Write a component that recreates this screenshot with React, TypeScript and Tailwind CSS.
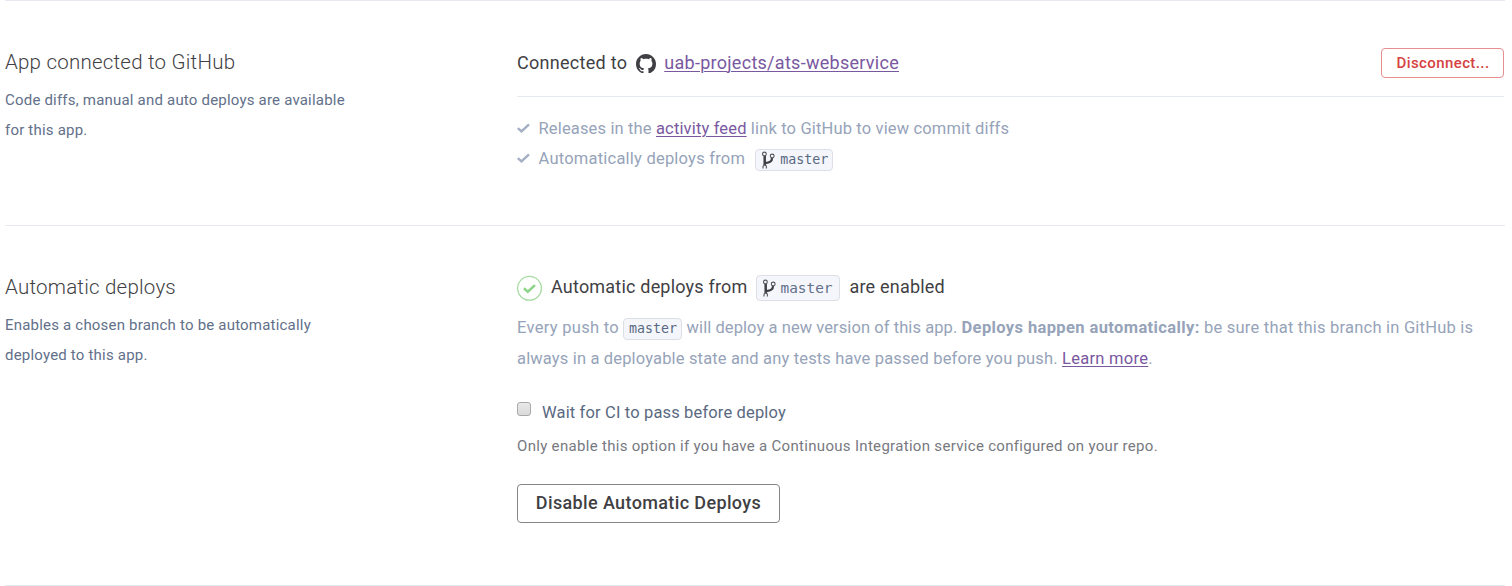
import type { ReactNode } from "react";

function GitHubMark() {
  return (
    <svg viewBox="0 0 16 15.2" className="h-[19px] w-5 shrink-0 fill-[#3f3f44]" aria-hidden="true">
      <path d="M8 0C3.58 0 0 3.58 0 8c0 3.54 2.29 6.53 5.47 7.59.4.07.55-.17.55-.38 0-.19-.01-.82-.01-1.49-2.01.37-2.53-.49-2.69-.94-.09-.23-.48-.94-.82-1.13-.28-.15-.68-.52-.01-.53.63-.01 1.08.58 1.23.82.72 1.21 1.87.87 2.33.66.07-.52.28-.87.51-1.07-1.78-.2-3.64-.89-3.64-3.95 0-.87.31-1.59.82-2.15-.08-.2-.36-1.02.08-2.12 0 0 .67-.21 2.2.82.64-.18 1.32-.27 2-.27s1.36.09 2 .27c1.53-1.04 2.2-.82 2.2-.82.44 1.1.16 1.92.08 2.12.51.56.82 1.27.82 2.15 0 3.07-1.87 3.75-3.65 3.95.29.25.54.73.54 1.48 0 1.07-.01 1.93-.01 2.2 0 .21.15.46.55.38A8.01 8.01 0 0 0 16 8c0-4.42-3.58-8-8-8z" />
    </svg>
  );
}

function BranchIcon() {
  return (
    <svg viewBox="0 0 14 18" className="h-[18px] w-[14px] shrink-0" fill="none" aria-hidden="true">
      <path d="M3.7 5v9" stroke="#3f3f44" strokeWidth="2.5" />
      <path d="M11 7C11 10.6 8.8 11.4 4.2 12.2" stroke="#3f3f44" strokeWidth="2.3" />
      <circle cx="3.4" cy="3" r="1.9" fill="#f4f6fb" stroke="#55555a" strokeWidth="1.1" />
      <circle cx="11.2" cy="5" r="1.9" fill="#f4f6fb" stroke="#55555a" strokeWidth="1.1" />
      <path d="M2 17.4v-1.6a1.7 1.7 0 0 1 3.4 0v1.6" fill="#f4f6fb" stroke="#55555a" strokeWidth="1.1" />
    </svg>
  );
}

function Check() {
  return (
    <svg viewBox="0 0 13 10" className="-mt-[3px] mr-[8.5px] h-[10px] w-[13px] shrink-0" fill="none" aria-hidden="true">
      <path d="M.8 5.2 4.5 8.4 12 1.3" stroke="#a4afc4" strokeWidth="2.4" />
    </svg>
  );
}

function Section({ title, text, height, children }: { title: string; text: ReactNode; height: string; children: ReactNode }) {
  return (
    <section className={`flex border-t border-[#e6e8f3] ${height}`}>
      <div className="w-[512px] shrink-0 pt-[46px]">
        <h2 className="text-[20.5px] leading-[30px] font-light tracking-[0.22px] text-[#3f3f44]">{title}</h2>
        <p className="mt-2 text-[15px] leading-[30px] tracking-[0.2px] text-[#62708a]">{text}</p>
      </div>
      <div className="w-[987px] pt-[47px]">{children}</div>
    </section>
  );
}

const link = "text-[#79589f] underline decoration-1 underline-offset-2";

export default function App() {
  return (
    <main className="h-[586px] w-[1512px] overflow-hidden bg-white pl-[5px] font-['Roboto',sans-serif]">
      <div className="w-[1500px] border-b border-[#e6e8f3]">
        <Section
          height="h-[225px]"
          title="App connected to GitHub"
          text={<>Code diffs, manual and auto deploys are available<br />for this app.</>}
        >
          <div className="flex h-[49px] items-start justify-between border-b border-[#e3e8f1]">
            <div className="flex h-[30px] items-center text-[18px] tracking-[0.28px] text-[#3f3f44]">
              <span className="-mt-[2px] mr-[9px]">Connected to</span>
              <GitHubMark />
              <a href="#" className={`-mt-[2px] ml-[8px] ${link}`}>uab-projects/ats-webservice</a>
            </div>
            <button className="h-[30px] w-[123px] rounded-[4px] border border-[#e78f8f] pl-px text-[15px] font-medium tracking-[0.4px] text-[#d64242]">Disconnect...</button>
          </div>
          <ul className="mt-[17px] text-[16.5px] leading-[30px] text-[#96a3b9]">
            <li className="flex items-center tracking-[0.15px]">
              <Check />
              <span>Releases in the <a href="#" className={link}>activity feed</a> link to GitHub to view commit diffs</span>
            </li>
            <li className="flex items-center tracking-[0.22px]">
              <Check />
              <span>Automatically deploys from</span>
              <code className="mt-[2px] ml-[10px] flex h-[22px] w-[78px] items-center gap-[5px] rounded-[4px] border border-[#dcdfe6] bg-[#f4f6fb] pl-[5px] font-['DejaVu_Sans_Mono',monospace] text-[13.3px] leading-[18px] tracking-normal text-[#596981]">
                <BranchIcon />master
              </code>
            </li>
          </ul>
        </Section>
        <Section
          height="h-[360px]"
          title="Automatic deploys"
          text={<>Enables a chosen branch to be automatically<br />deployed to this app.</>}
        >
          <div className="flex h-[30px] items-center text-[18px] tracking-[0.2px] text-[#3f3f44]">
            <svg viewBox="0 0 26 26" className="mr-[8px] size-[26px] shrink-0" fill="none" aria-hidden="true">
              <circle cx="12.5" cy="13.3" r="11.9" stroke="#a5dba1" strokeWidth="1.3" />
              <path d="m6.9 13.3 3.9 3.4 7.2-6.6" stroke="#8fd48a" strokeWidth="2.6" />
            </svg>
            <span className="-mt-[3px]">Automatic deploys from</span>
            <code className="ml-[8px] flex h-[26px] w-[84px] items-center gap-[5px] rounded-[4px] border border-[#dcdfe6] bg-[#f4f6fb] pl-[5px] font-['DejaVu_Sans_Mono',monospace] text-[14.4px] tracking-normal text-[#62708a]">
              <BranchIcon /><span className="mt-px">master</span>
            </code>
            <span className="-mt-[3px] ml-[10px]">are enabled</span>
          </div>
          <p className="mt-[9px] text-[16.5px] leading-[31px] text-[#96a3b9]">
            <span className="tracking-[0.3px]">Every push to </span>
            <code className="inline-block h-[22px] w-[59px] rounded-[4px] border border-[#dcdfe6] bg-[#f4f6fb] text-center font-['DejaVu_Sans_Mono',monospace] text-[13.3px] leading-[20px] text-[#596981]">master</code>
            <span className="tracking-[0.07px]"> will deploy a new version of this app. </span>
            <strong className="font-bold tracking-[0.38px]">Deploys happen automatically:</strong>
            <span className="tracking-[0.22px]"> be sure that this branch in GitHub is</span>
            <br />
            <span className="tracking-[0.155px]">always in a deployable state and any tests have passed before you push. </span>
            <a href="#" className={`tracking-[0.28px] ${link}`}>Learn more</a>.
          </p>
          <label className="mt-[24px] flex h-[30px] items-center text-[16.5px] tracking-[0.15px] text-[#596981]">
            <input type="checkbox" className="mr-[11px] -mt-[9px] size-[14px] appearance-none rounded-[3px] border border-[#a9a9a9] bg-linear-to-b from-[#e9e9e9] to-[#dadada]" />
            <span>Wait for CI to pass before deploy</span>
          </label>
          <p className="mt-[3px] text-[15px] leading-[30px] tracking-[0.31px] text-[#77797f]">
            Only enable this option if you have a Continuous Integration service configured on your repo.
          </p>
          <button className="mt-[23px] block h-[39px] w-[263px] rounded-[4px] border border-[#85858a] pb-[2px] text-[18px] font-medium tracking-[0.37px] text-[#3f3f44]">Disable Automatic Deploys</button>
        </Section>
      </div>
    </main>
  );
}
